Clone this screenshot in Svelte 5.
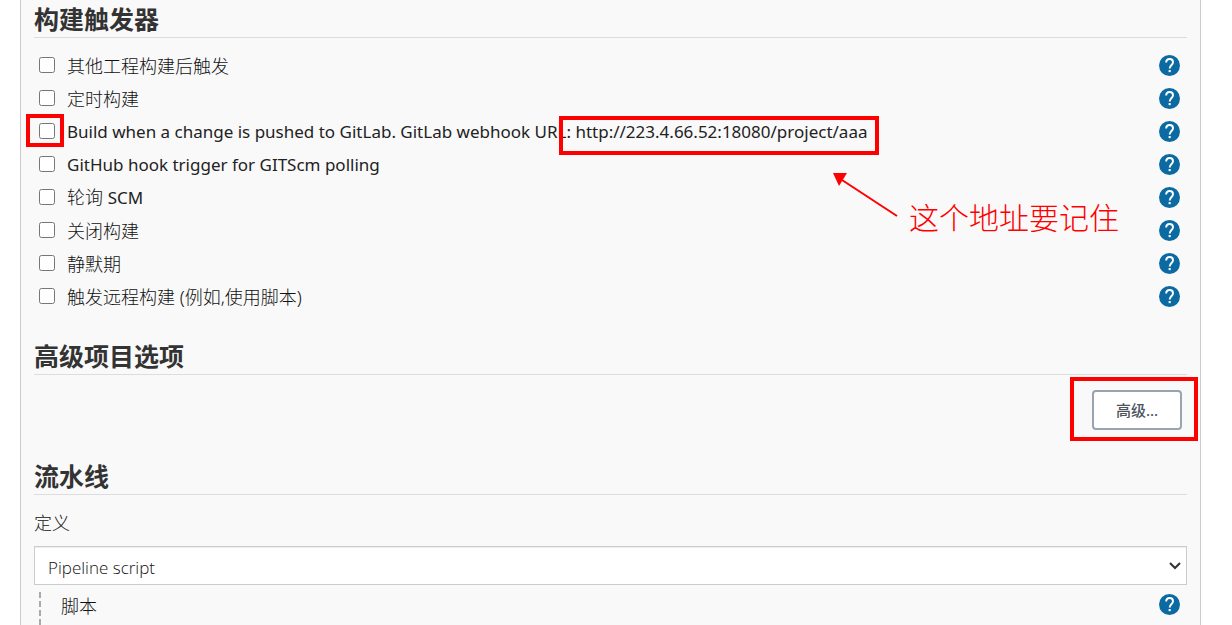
<script>
  const triggers = [
    { id: "upstream", label: "其他工程构建后触发" },
    { id: "timer", label: "定时构建" },
    {
      id: "gitlab",
      latin: "Build when a change is pushed to GitLab. GitLab webhook URL: http://223.4.66.52:18080/project/aaa",
      marked: true,
    },
    { id: "github", latin: "GitHub hook trigger for GITScm polling" },
    { id: "scm", label: "轮询 ", latin: "SCM" },
    { id: "disable", label: "关闭构建" },
    { id: "quiet", label: "静默期" },
    { id: "remote", label: "触发远程构建 (例如,使用脚本)" },
  ];

  let definition = $state("script");
</script>

{#snippet help(name)}
  <button class="help" type="button" aria-label="Help: {name}">
    <svg viewBox="0 0 24 24" aria-hidden="true">
      <circle cx="12" cy="12" r="12" fill="#0b6aa2" />
      <path
        d="M8.200 8.700C8.200 6.200 9.900 4.600 12.100 4.600S16 6.200 16 8.300C16 11.200 12.200 11.700 12.200 15.500"
        fill="none"
        stroke="#fff"
        stroke-width="2.200"
      />
      <rect x="11" y="17.200" width="2.400" height="2.400" fill="#fff" />
    </svg>
  </button>
{/snippet}

<main class="config">
  <section>
    <h2>构建触发器</h2>
    <ul class="triggers">
      {#each triggers as { id, label = "", latin = "", marked } (id)}
        <li>
          <span class="check" class:marked>
            <input type="checkbox" {id} />
          </span>
          <label for={id}>{label}{#if latin}<span class="latin">{latin}</span>{/if}</label>
          {@render help(label + latin)}
        </li>
      {/each}
    </ul>
    <div class="url-box"></div>
    <svg class="arrow" viewBox="0 0 66 46" aria-hidden="true">
      <path d="M9 7L64 43" stroke="#f00" stroke-width="2" />
      <path d="M0 0H14L6 13Z" fill="#f00" />
    </svg>
    <p class="note">这个地址要记住</p>
  </section>

  <section>
    <h2>高级项目选项</h2>
    <div class="actions">
      <span class="marked">
        <button class="advanced" type="button">高级...</button>
      </span>
    </div>
  </section>

  <section>
    <h2>流水线</h2>
    <label class="field-label" for="definition">定义</label>
    <div class="select">
      <select id="definition" bind:value={definition}>
        <option value="script">Pipeline script</option>
        <option value="scm">Pipeline script from SCM</option>
      </select>
      <svg viewBox="0 0 12 8" aria-hidden="true">
        <path d="M1 1L6 6L11 1" fill="none" stroke="#333" stroke-width="2" />
      </svg>
    </div>
    <div class="nested">
      <span>脚本</span>
      {@render help("脚本")}
    </div>
  </section>
</main>

<style>
:global(body) {
  margin: 0;
  background: #fff;
}

.config {
  box-sizing: border-box;
  position: relative;
  display: flex;
  flex-direction: column;
  min-height: 100vh;
  margin: 0 31px 0 20px;
  padding: 0 13px;
  border: solid #ccc;
  border-width: 0 1px;
  background: #f9f9f9;
  color: #111;
  font-family: "Noto Sans", "Noto Sans CJK SC", sans-serif;
  font-size: 18px;
  font-weight: 300;
  line-height: 24px;
}

h2 {
  margin: 0;
  padding-top: 1px;
  border-bottom: 1px solid #ddd;
  color: #333;
  font-size: 25px;
  font-weight: 700;
  line-height: 36px;
}

/* triggers */
.triggers {
  margin: 0;
  padding: 11px 7px 24px 5px;
  list-style: none;
}

.triggers li {
  display: flex;
  align-items: center;
  height: 33px;
}

.triggers label {
  flex: 1;
  margin-left: 12px;
}

.latin {
  color: #222;
  font-size: 17px;
  font-weight: 450;
}

.check {
  position: relative;
  display: flex;
  margin-bottom: 2px;
}

.check input {
  width: 16px;
  height: 16px;
  margin: 0;
}

.help {
  display: flex;
  padding: 0;
  border: none;
  background: none;
  cursor: pointer;
}

.help svg {
  width: 21px;
  height: 21px;
}

/* red callouts */
.marked {
  position: relative;
}

.marked::after,
.url-box {
  position: absolute;
  box-sizing: border-box;
  border: 4px solid #f00;
  pointer-events: none;
}

.marked::after {
  content: "";
  inset: -13px -16px -11px -22px;
}

.check.marked::after {
  inset: -9px -9px -8px -13px;
}

.url-box {
  top: 116px;
  left: 538px;
  width: 320px;
  height: 39px;
}

.arrow {
  position: absolute;
  top: 173px;
  left: 812px;
  width: 66px;
  height: 46px;
  pointer-events: none;
}

.note {
  position: absolute;
  top: 198px;
  left: 888px;
  margin: 0;
  color: #f00;
  font-family: "Noto Sans CJK SC", sans-serif;
  font-size: 30px;
  font-weight: 300;
  line-height: 36px;
}

/* advanced options */
.actions {
  display: flex;
  justify-content: flex-end;
  padding: 15px 5px 27px;
}

.advanced {
  display: block;
  width: 90px;
  height: 40px;
  padding: 0 0 2px;
  border: 2px solid #98a5b0;
  border-radius: 4px;
  background: #fff;
  color: #4d545d;
  font-family: "Noto Sans", "Noto Sans CJK SC", sans-serif;
  font-size: 15px;
  font-weight: 500;
  cursor: pointer;
}

/* pipeline */
.config section:last-child {
  display: flex;
  flex: 1;
  flex-direction: column;
}

.field-label {
  padding: 16px 0 11px;
}

.select {
  position: relative;
}

.select select {
  width: 100%;
  height: 39px;
  padding: 4px 13px 0;
  border: 1px solid #ccc;
  border-radius: 0;
  background: #fff;
  box-shadow: inset 0 1px 1px #eee;
  color: #111;
  font-family: "Open Sans", sans-serif;
  font-size: 17px;
  font-weight: 300;
  appearance: none;
}

.select svg {
  position: absolute;
  top: 16px;
  right: 6px;
  width: 12px;
  height: 8px;
  pointer-events: none;
}

.nested {
  display: flex;
  flex: 1;
  align-items: flex-start;
  justify-content: space-between;
  margin: 7px 7px 0 5px;
  padding: 2px 0 0 20px;
  border-left: 2px dashed #aaa;
}
</style>
